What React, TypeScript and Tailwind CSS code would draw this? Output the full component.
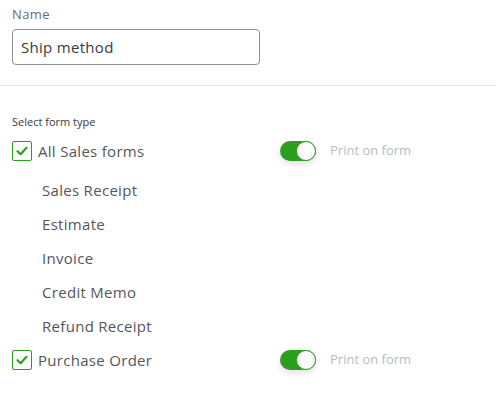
import React from "react";

const Check = () => (
  <span className="flex h-5 w-5 shrink-0 items-center justify-center rounded-[2px] border border-[#2ca01c] bg-white">
    <svg width="14" height="14" viewBox="0 0 14 14" fill="none">
      <path
        d="M2.5 7.2 L5.6 10.2 L11.5 3.8"
        stroke="#2ca01c"
        strokeWidth="2.2"
        strokeLinecap="round"
        strokeLinejoin="round"
      />
    </svg>
  </span>
);

const Toggle = () => (
  <span className="relative flex h-5 w-9 items-center rounded-full bg-[#2ca01c] shadow-[0_3px_6px_rgba(0,0,0,0.12)]">
    <span className="absolute right-0 top-0 h-5 w-5 rounded-full border border-[#2ca01c] bg-white" />
  </span>
);

const FormRow = ({ label, className }: { label: string; className?: string }) => (
  <div className={"flex h-[34px] items-center " + (className ?? "")}>
    <div className="flex w-[268px] items-center gap-[6px]">
      <Check />
      <span className="text-[15px] tracking-[0.3px] text-[#55565a]">{label}</span>
    </div>
    <Toggle />
    <span className="ml-[14px] text-[13px] text-[#b8bcc2]">Print on form</span>
  </div>
);

const subForms = ["Sales Receipt", "Estimate", "Invoice", "Credit Memo", "Refund Receipt"];

export default function App() {
  return (
    <div
      className="h-[400px] w-[496px] overflow-hidden bg-white"
      style={{ fontFamily: "'Open Sans', Lato, sans-serif" }}
    >
      <div className="px-3 pt-[5px]">
        <label className="block text-[13px] leading-[18px] tracking-[0.4px] text-[#6b6c72]">Name</label>
        <div className="mt-[6px] flex h-9 w-[248px] items-center rounded-[4px] border border-[#8d9096] px-2 text-[15px] tracking-[0.3px] text-[#393a3d]">
          Ship method
        </div>
      </div>
      <div className="mt-5 h-px w-full bg-[#e3e5e8]" />
      <div className="px-3 pt-[29px]">
        <p className="text-[11px] leading-[14px] text-[#393a3d]">Select form type</p>
        <FormRow label="All Sales forms" className="mt-[5px]" />
        <div className="mt-[5px]">
          {subForms.map((f) => (
            <div
              key={f}
              className="flex h-[34px] items-center pl-[30px] text-[15px] tracking-[0.3px] text-[#55565a]"
            >
              {f}
            </div>
          ))}
        </div>
        <FormRow label="Purchase Order" />
      </div>
    </div>
  );
}
